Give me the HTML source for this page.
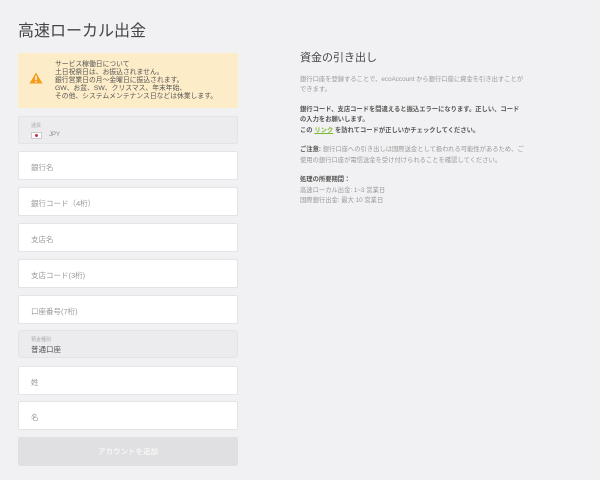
<!DOCTYPE html>
<html><head><meta charset="utf-8"><style>
*{box-sizing:border-box;margin:0;padding:0}
body{width:600px;height:480px;background:#f1f1f3;font-family:"Liberation Sans","Noto Sans CJK JP",sans-serif;position:relative;overflow:hidden;color:#444}
.t{position:absolute;left:18px;top:17px;font-size:16px;color:#444}
.warn{position:absolute;left:18px;top:53px;width:220px;height:55px;background:#fdecc8;font-size:6.8px;line-height:8px;color:#555;padding:8px 0 0 37px}
.warn svg{position:absolute;left:11px;top:19px}
.f{position:absolute;left:18px;width:220px;height:29px;background:#fff;border:1px solid #e4e4e6;border-radius:2px;font-size:7.5px;color:#999;padding:10px 0 0 12px}
.g{background:#ececee}
.lbl{font-size:5px;color:#aaa;position:absolute;left:12px;top:5px}
.btn{position:absolute;left:18px;top:437px;width:220px;height:29px;background:#e0e0e2;border-radius:2px;color:#fff;font-size:7.5px;text-align:center;line-height:29px}
.r{position:absolute;left:300px;top:53px;width:226px;font-size:6.3px;line-height:10.5px;color:#999}
.r h2{font-size:11px;font-weight:normal;color:#444;margin-bottom:11px}
.r p{margin-bottom:9px}
.b{color:#555;font-weight:bold}
</style></head><body>
<div class="t">高速ローカル出金</div>
<div class="warn"><svg width="14" height="12" viewBox="0 0 14 12"><path d="M7 0.5L13.5 11.5H0.5Z" fill="#f59a1b"/><rect x="6.3" y="3.8" width="1.4" height="4.2" fill="#fff"/><rect x="6.3" y="9" width="1.4" height="1.3" fill="#fff"/></svg>
サービス稼働日について<br>土日祝祭日は、お振込されません。<br>銀行営業日の月～金曜日に振込されます。<br>GW、お盆、SW、クリスマス、年末年始、<br>その他、システムメンテナンス日などは休業します。</div>
<div class="f g" style="top:116px;height:28px"><span class="lbl">通貨</span><span style="position:absolute;left:12px;top:15px;width:11px;height:7px;background:#fff;border:1px solid #ccc"><span style="position:absolute;left:3px;top:1px;width:3px;height:3px;border-radius:50%;background:#c8304a"></span></span><span style="position:absolute;left:30px;top:15px;font-size:6px;color:#888">JPY</span></div>
<div class="f" style="top:151px">銀行名</div>
<div class="f" style="top:187px">銀行コード（4桁）</div>
<div class="f" style="top:223px">支店名</div>
<div class="f" style="top:259px">支店コード(3桁)</div>
<div class="f" style="top:295px">口座番号(7桁)</div>
<div class="f g" style="top:330px;height:28px"><span class="lbl">預金種別</span><span style="position:absolute;left:12px;top:13px;color:#555">普通口座</span></div>
<div class="f" style="top:366px">姓</div>
<div class="f" style="top:401px">名</div>
<div class="btn">アカウントを追加</div>
<div class="r"><h2>資金の引き出し</h2>
<p>銀行口座を登録することで、ecoAccount から銀行口座に資金を引き出すことが<br>できます。</p>
<p class="b">銀行コード、支店コードを間違えると振込エラーになります。正しい、コード<br>の入力をお願いします。<br>この <span style="color:#7cb82f;text-decoration:underline">リンク</span> を訪れてコードが正しいかチェックしてください。</p>
<p><span class="b">ご注意:</span> 銀行口座への引き出しは国際送金として扱われる可能性があるため、ご<br>使用の銀行口座が電信送金を受け付けられることを確認してください。</p>
<p><span class="b">処理の所要期間：</span><br>高速ローカル出金: 1~3 営業日<br>国際銀行出金: 最大 10 営業日</p></div>
</body></html>
